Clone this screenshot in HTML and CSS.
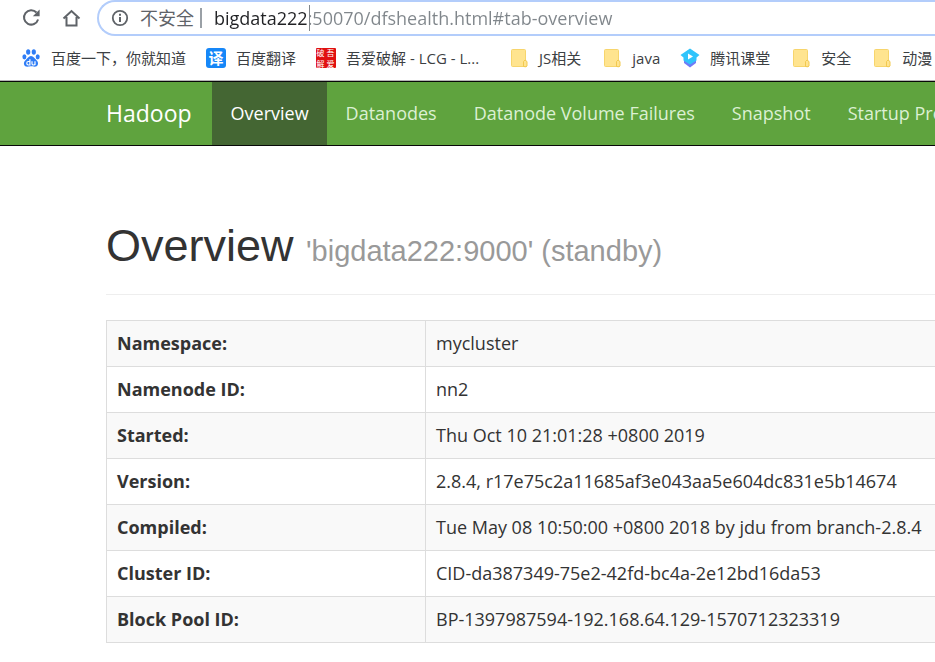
FILE: index.html
```html
<!DOCTYPE html>
<html lang="en">
<head>
<meta charset="utf-8">
<title>Namenode information</title>
<link rel="stylesheet" href="styles.css">
</head>
<body>
<svg class="sprite" aria-hidden="true">
  <symbol id="folder" viewBox="0 0 20 20">
    <path d="M4.500 1.500h12a1 1 0 0 1 1 1v16h-13a1 1 0 0 1-1-1v-15a1 1 0 0 1 1-1z" fill="#ffe48f" stroke="#f7d56c"/>
    <path d="M15.500 18.500v-5l1.500-1.500 2 1.500v4.500l-1 .8z" fill="#ffe48f" stroke="#f2c94f"/>
  </symbol>
</svg>
<header class="browser">
  <div class="toolbar">
    <button class="tool" aria-label="Reload">
      <svg viewBox="0 0 20 20" width="20" height="20"><path d="M15.500 4.500A7.200 7.200 0 1 0 17.100 11.500" fill="none" stroke="#5f6368" stroke-width="2"/><path d="M18.600 1.500v6.800h-6.800z" fill="#5f6368"/></svg>
    </button>
    <button class="tool" aria-label="Home">
      <svg viewBox="0 0 20 20" width="20" height="20"><path d="M2.500 10.500L10.500 3l8 7.500M5.500 9v8.500h10V9" fill="none" stroke="#5f6368" stroke-width="2"/></svg>
    </button>
    <div class="address">
      <svg class="info" viewBox="0 0 18 18" width="18" height="18"><circle cx="9" cy="9" r="7.200" fill="none" stroke="#5f6368" stroke-width="1.800"/><path d="M9 8v5M9 4.800v2" stroke="#5f6368" stroke-width="2"/></svg>
      <label class="security" for="url">不安全</label>
      <span class="divider"></span>
      <input id="url" class="url" type="text" spellcheck="false" value="bigdata222:50070/dfshealth.html#tab-overview">
    </div>
  </div>
  <nav class="bookmarks" aria-label="Bookmarks">
    <a href="#"><svg viewBox="0 0 20 20"><g fill="#2f7df6"><ellipse cx="7.200" cy="4" rx="2.100" ry="2.800"/><ellipse cx="12.800" cy="4" rx="2.100" ry="2.800"/><ellipse cx="3.400" cy="8.800" rx="2" ry="2.600"/><ellipse cx="16.700" cy="8.800" rx="2" ry="2.600"/><path d="M10 8c2.500 0 3.500 2.500 5.500 4.200 3 2.800 1.300 6.500-1.800 6.500-1.600 0-2.300-.4-3.700-.4s-2.100.4-3.700.4c-3.100 0-4.800-3.700-1.800-6.500C6.500 10.500 7.500 8 10 8z"/></g><path d="M8.900 11.200V17H7.300c-2 0-2-3.500 0-3.500h1.600M11 13.200v2.500c0 1.700 3 1.700 3 0v-2.500V17" fill="none" stroke="#fff" stroke-width="1.200"/></svg>百度一下，你就知道</a>
    <a href="#"><span class="translate">译</span>百度翻译</a>
    <a class="truncated" href="#"><span class="seal"><span>破</span><span>吾</span><span>解</span><span>爱</span></span>吾爱破解 - LCG - L...</a>
    <a class="folder" href="#"><svg><use href="#folder"/></svg>JS相关</a>
    <a class="folder" href="#"><svg><use href="#folder"/></svg>java</a>
    <a href="#"><svg viewBox="0 0 20 20"><path d="M4 12v3l6 4.500 6-4.500v-3z" fill="#6f7bf7"/><path d="M10 .5l9.500 6.500-3 2.500v3L10 16.500l-6.500-4v-3L.5 7z" fill="#2fc4fb"/><path d="M8 5.500v6l5-3z" fill="#fff"/></svg>腾讯课堂</a>
    <a class="folder" href="#"><svg><use href="#folder"/></svg>安全</a>
    <a class="folder" href="#"><svg><use href="#folder"/></svg>动漫</a>
  </nav>
</header>
<nav class="navbar">
  <a class="brand" href="#">Hadoop</a>
  <a class="active" href="#tab-overview">Overview</a>
  <a href="#tab-datanode">Datanodes</a>
  <a href="#tab-volumes">Datanode Volume Failures</a>
  <a href="#tab-snapshot">Snapshot</a>
  <a href="#tab-startup">Startup Progress</a>
</nav>
<main class="container">
  <h1>Overview <small>'bigdata222:9000' (standby)</small></h1>
  <table>
    <tbody>
      <tr><th scope="row">Namespace:</th><td>mycluster</td></tr>
      <tr><th scope="row">Namenode ID:</th><td>nn2</td></tr>
      <tr><th scope="row">Started:</th><td>Thu Oct 10 21:01:28 +0800 2019</td></tr>
      <tr><th scope="row">Version:</th><td>2.8.4, r17e75c2a11685af3e043aa5e604dc831e5b14674</td></tr>
      <tr><th scope="row">Compiled:</th><td>Tue May 08 10:50:00 +0800 2018 by jdu from branch-2.8.4</td></tr>
      <tr><th scope="row">Cluster ID:</th><td>CID-da387349-75e2-42fd-bc4a-2e12bd16da53</td></tr>
      <tr><th scope="row">Block Pool ID:</th><td>BP-1397987594-192.168.64.129-1570712323319</td></tr>
    </tbody>
  </table>
</main>
</body>
</html>
```
FILE: styles.css
```css
* {
  box-sizing: border-box;
}

body {
  margin: 0;
  overflow-x: hidden;
  background: #fff;
  color: #333;
  font-family: "Open Sans", "Noto Sans CJK SC", sans-serif;
  font-size: 18px;
  line-height: 25px;
}

a {
  color: inherit;
  text-decoration: none;
}

.sprite {
  display: none;
}

.browser {
  height: 81px;
  overflow: hidden;
  border-bottom: 1px solid #b5b5b5;
}

.toolbar {
  display: flex;
  align-items: center;
  height: 36px;
  padding-left: 21px;
  gap: 20px;
}

.tool {
  display: flex;
  padding: 0;
  border: 0;
  background: none;
}

.address {
  display: flex;
  flex: 1;
  align-items: center;
  align-self: stretch;
  margin-left: -4px;
  padding-left: 12px;
  border: 2px solid #b3cdfb;
  border-right: 0;
  border-radius: 18px 0 0 18px;
}

.info {
  flex: none;
}

.security {
  margin-left: 11px;
  color: #5f6368;
}

.divider {
  width: 2px;
  height: 20px;
  margin: 0 12px 0 6px;
  background: #9aa0a6;
}

.url {
  flex: 1;
  min-width: 0;
  height: 26px;
  padding: 0;
  border: 0;
  outline: 0;
  font: inherit;
  color: transparent;
  background:
    linear-gradient(#80868b, #80868b) 95px 0 / 1px 100% no-repeat padding-box,
    linear-gradient(90deg, #202124 95px, #80868b 95px);
  background-clip: padding-box, text;
}

.bookmarks {
  display: flex;
  align-items: center;
  height: 44px;
  padding-left: 21px;
  gap: 20px;
  color: #3c4043;
  font-size: 15px;
  white-space: nowrap;
}

.bookmarks a {
  display: flex;
  flex: none;
  align-items: center;
  gap: 10px;
}

.bookmarks .truncated {
  min-width: 172px;
}

.bookmarks .folder {
  gap: 11px;
}

.bookmarks svg {
  width: 20px;
  height: 20px;
}

.translate {
  width: 20px;
  height: 20px;
  border-radius: 3px;
  background: #1687f8;
  color: #fff;
  font-size: 15px;
  font-weight: bold;
  line-height: 20px;
  text-align: center;
}

.seal {
  display: grid;
  grid-template-columns: 9px 9px;
  gap: 1px;
  width: 20px;
  height: 20px;
  border-radius: 1px;
  background: #e01010;
  color: #fff;
  font-size: 8px;
  line-height: 9px;
  text-align: center;
}

.navbar {
  display: flex;
  height: 65px;
  padding-left: 87px;
  overflow: hidden;
  border: solid #080808;
  border-width: 1px 0;
  background: #5fa33e;
  color: #dcf0d3;
  line-height: 62px;
  white-space: nowrap;
}

.navbar a {
  flex: none;
  padding: 0 18px 0 19px;
}

.navbar .brand {
  padding-right: 20px;
  color: #fff;
  font-size: 23px;
}

.navbar .active {
  background: #446633;
  color: #fff;
}

.container {
  padding: 75px 0 19px 106px;
}

h1 {
  margin: 0 0 25px;
  padding-bottom: 18px;
  border-bottom: 1px solid #eee;
  font: 45px/50px "Liberation Sans", sans-serif;
}

small {
  color: #999;
  font-size: 29px;
}

table {
  width: 100%;
  border-collapse: collapse;
  white-space: nowrap;
}

th,
td {
  height: 46px;
  padding: 10px;
  border: 1px solid #ddd;
  text-align: left;
}

td {
  border-right: 0;
}

th {
  width: 319px;
}

tr:nth-child(odd) {
  background: #f9f9f9;
}
```
